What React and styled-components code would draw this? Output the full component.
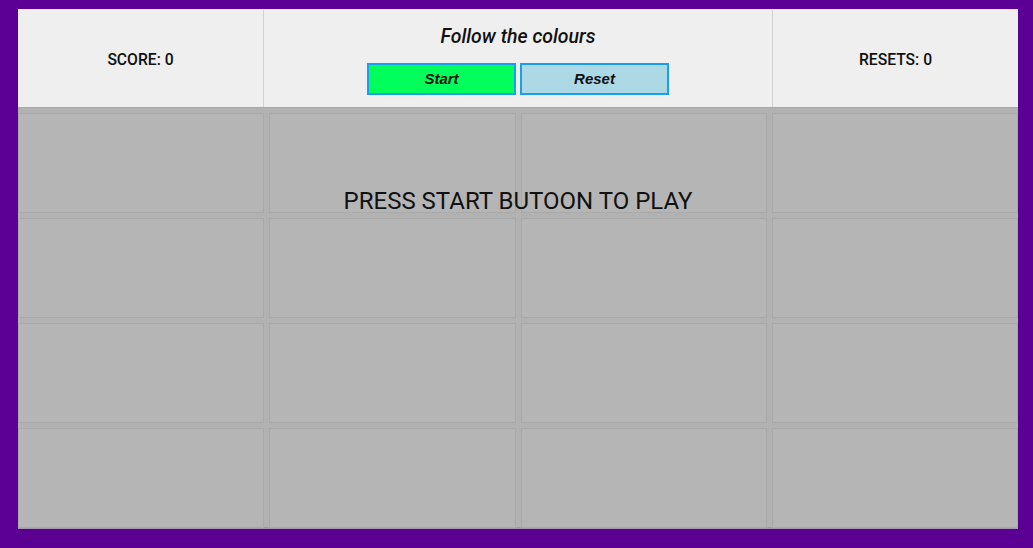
import React from "react";
import styled, { createGlobalStyle } from "styled-components";

const Global = createGlobalStyle`
  html, body { margin: 0; padding: 0; }
  body {
    background: #5c0094;
    font-family: Roboto, "Liberation Sans", sans-serif;
    width: 1033px;
    height: 548px;
    overflow: hidden;
  }
`;

const Frame = styled.div`
  padding: 9px 15px 0 18px;
`;

const Board = styled.div`
  width: 1000px;
  display: flex;
  flex-direction: column;
`;

const Header = styled.header`
  display: grid;
  grid-template-columns: 245px 509px 246px;
  height: 98px;
  background: #efefef;
  border-top: 1px solid #f3e4f8;
  box-sizing: border-box;
`;

const Stat = styled.div`
  display: flex;
  align-items: center;
  justify-content: center;
  font-size: 15.7px;
  font-weight: 500;
  color: #111;
  padding-top: 2px;
  border-left: ${(p) => (p.$divider ? "1px solid #d2d2d2" : "none")};
`;

const Center = styled.div`
  display: flex;
  flex-direction: column;
  align-items: center;
  border-left: 1px solid #d2d2d2;
  padding-top: 15px;
`;

const Title = styled.h1`
  margin: 0;
  font-size: 19.5px;
  font-style: italic;
  font-weight: 500;
  color: #111;
  line-height: 24px;
`;

const Buttons = styled.div`
  display: flex;
  gap: 4px;
  margin-top: 14px;
`;

const Button = styled.button`
  width: 149px;
  height: 32px;
  border: 2px solid #1a9ff0;
  background: ${(p) => p.$bg};
  font-family: "Liberation Sans", Arial, sans-serif;
  font-size: 15px;
  font-weight: bold;
  font-style: italic;
  color: #111;
  padding: 0 0 2px;
  cursor: pointer;
`;

const GridWrap = styled.div`
  position: relative;
  background: #b2b2b2;
  border-top: 1px solid #a8a8a8;
  border-bottom: 2px solid #a496ad;
  padding-top: 5px;
`;

const Grid = styled.div`
  display: grid;
  grid-template-columns: repeat(4, 1fr);
  grid-template-rows: repeat(4, 100px);
  column-gap: 5px;
  row-gap: 5px;
  height: 414px;
`;

const Cell = styled.div`
  background: #b5b5b5;
  border: 1px solid #a9a9a9;
`;

const Message = styled.div`
  position: absolute;
  left: 0;
  right: 0;
  top: 79px;
  text-align: center;
  font-size: 24px;
  color: #111;
  pointer-events: none;
`;

export default function App() {
  const cells = Array.from({ length: 16 });
  return (
    <>
      <Global />
      <Frame>
        <Board>
          <Header>
            <Stat>SCORE: 0</Stat>
            <Center>
              <Title>Follow the colours</Title>
              <Buttons>
                <Button $bg="#00ff5a">Start</Button>
                <Button $bg="#add8e6">Reset</Button>
              </Buttons>
            </Center>
            <Stat $divider>RESETS: 0</Stat>
          </Header>
          <GridWrap>
            <Grid>
              {cells.map((_, i) => (
                <Cell key={i} />
              ))}
            </Grid>
            <Message>PRESS START BUTOON TO PLAY</Message>
          </GridWrap>
        </Board>
      </Frame>
    </>
  );
}
